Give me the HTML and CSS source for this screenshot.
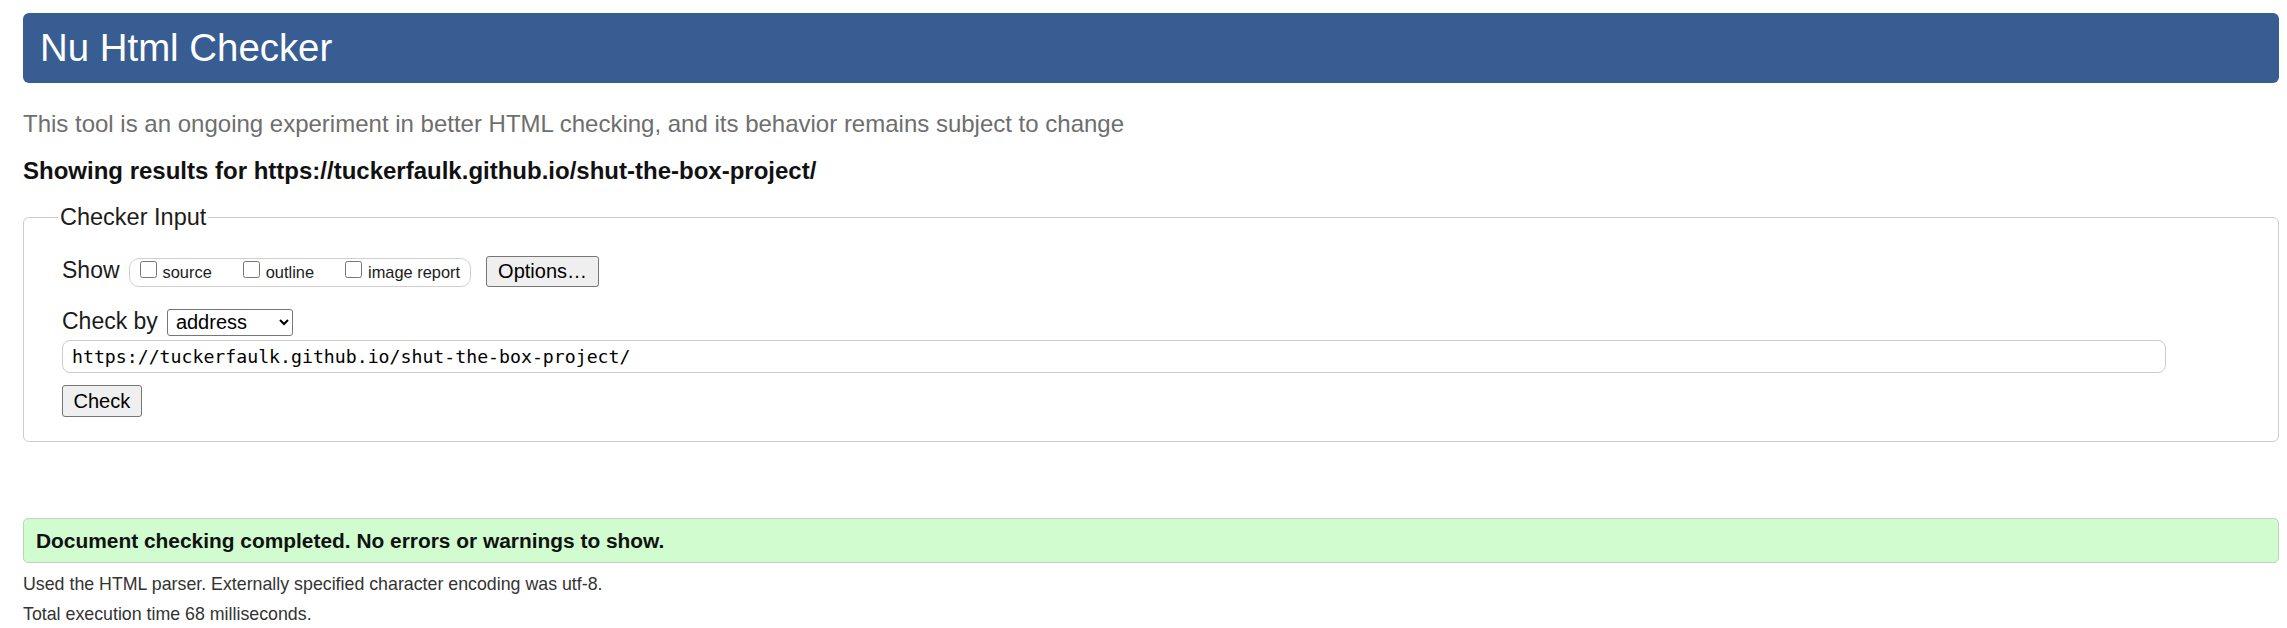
FILE: index.html
```html
<!DOCTYPE html>
<html lang="en">
<head>
<meta charset="utf-8">
<title>Nu Html Checker</title>
<link rel="stylesheet" href="styles.css">
</head>
<body>
<h1 class="title">Nu Html Checker</h1>
<p class="intro">This tool is an ongoing experiment in better HTML checking, and its behavior remains subject to change</p>
<p class="showing">Showing results for https://tuckerfaulk.github.io/shut-the-box-project/</p>
<form class="form">
<fieldset class="checker">
<legend class="legend">Checker Input</legend>
<div class="row row-show"><span class="lbl">Show</span><span class="group"><label class="opt"><input type="checkbox" class="cb">source</label><label class="opt"><input type="checkbox" class="cb">outline</label><label class="opt opt-last"><input type="checkbox" class="cb">image report</label></span><button type="button" class="btn btn-options">Options…</button></div>
<div class="row row-by"><label class="lbl" for="docselect">Check by</label><select id="docselect" class="sel"><option>address</option></select></div>
<input class="url" type="url" value="https://tuckerfaulk.github.io/shut-the-box-project/">
<div class="row row-submit"><button type="button" class="btn btn-check">Check</button></div>
</fieldset>
</form>
<p class="success">Document checking completed. No errors or warnings to show.</p>
<p class="meta">Used the HTML parser. Externally specified character encoding was utf-8.</p>
<p class="meta">Total execution time 68 milliseconds.</p>
</body>
</html>
```
FILE: styles.css
```css
html, body {
  background: #ffffff;
}
body {
  margin: 0;
  padding: 13px 8px 0 23px;
  font-family: "Liberation Sans", Arial, sans-serif;
  color: #1c1c1c;
}
.title {
  margin: 0;
  height: 70px;
  display: flex;
  align-items: center;
  padding-left: 17px;
  background: #385d93;
  color: #ffffff;
  border-radius: 6px;
  font-size: 38.4px;
  font-weight: normal;
  line-height: 44px;
}
.intro {
  margin: 27px 0 0;
  font-size: 24px;
  line-height: 27px;
  color: #6e6e6e;
}
.showing {
  margin: 19.6px 0 0;
  font-size: 24px;
  line-height: 27px;
  font-weight: bold;
  color: #111111;
}
.form {
  margin: 20.5px 0 0;
}
.checker {
  margin: 0;
  padding: 0 0 24px 38px;
  border: 1px solid #cccccc;
  border-radius: 6px;
}
.legend {
  margin-left: -4px;
  padding: 0 2px;
  font-size: 23.5px;
  line-height: 26px;
  color: #1c1c1c;
}
.row {
  display: flex;
  align-items: baseline;
}
.row-show {
  margin-top: 25.7px;
}
.row-by {
  margin-top: 21.5px;
}
.row-submit {
  margin-top: 12px;
}
.lbl {
  font-size: 23px;
  line-height: 26px;
  color: #1c1c1c;
}
.group {
  display: block;
  box-sizing: border-box;
  height: 29px;
  margin-left: 9px;
  padding: 2px 10px 0;
  border: 1px solid #cfcfcf;
  border-radius: 10px;
  font-size: 16.4px;
  line-height: 19px;
  white-space: nowrap;
}
.opt {
  margin-right: 31px;
  color: #1c1c1c;
}
.opt-last {
  margin-right: 0;
}
.cb {
  width: 17px;
  height: 17px;
  margin: 0 6px 0 0;
}
.btn {
  box-sizing: border-box;
  font-family: "Liberation Sans", Arial, sans-serif;
  font-size: 20px;
  color: #000000;
  background: #efefef;
  border: 1px solid #767676;
  border-radius: 3px;
}
.btn-options {
  height: 31px;
  margin-left: 15px;
  padding: 0 11px;
}
.btn-check {
  height: 32px;
  padding: 0 10.5px;
}
.sel {
  box-sizing: border-box;
  width: 126px;
  height: 27px;
  margin: 0 0 0 9px;
  padding: 0 0 0 4px;
  font-family: "Liberation Sans", Arial, sans-serif;
  font-size: 20px;
  color: #000000;
  background: #ffffff;
  border: 1px solid #767676;
  border-radius: 3px;
}
.url {
  display: block;
  box-sizing: border-box;
  width: 2104px;
  height: 33px;
  margin: 4.4px 0 0;
  padding: 0 9px;
  font-family: "DejaVu Sans Mono", "Liberation Mono", monospace;
  font-size: 18.2px;
  color: #000000;
  border: 1px solid #cccccc;
  border-radius: 8px;
  background: #ffffff;
}
.success {
  box-sizing: border-box;
  height: 45px;
  margin: 76px 0 0;
  padding: 0 12px;
  display: flex;
  align-items: center;
  background: #d0fcd0;
  border: 1px solid #bcd5bc;
  border-radius: 5px;
  font-size: 20.9px;
  line-height: 24px;
  font-weight: bold;
  color: #111111;
}
.meta {
  margin: 8px 0 0;
  font-size: 17.8px;
  line-height: 22px;
  color: #333333;
}
.success + .meta {
  margin-top: 10px;
}
```
